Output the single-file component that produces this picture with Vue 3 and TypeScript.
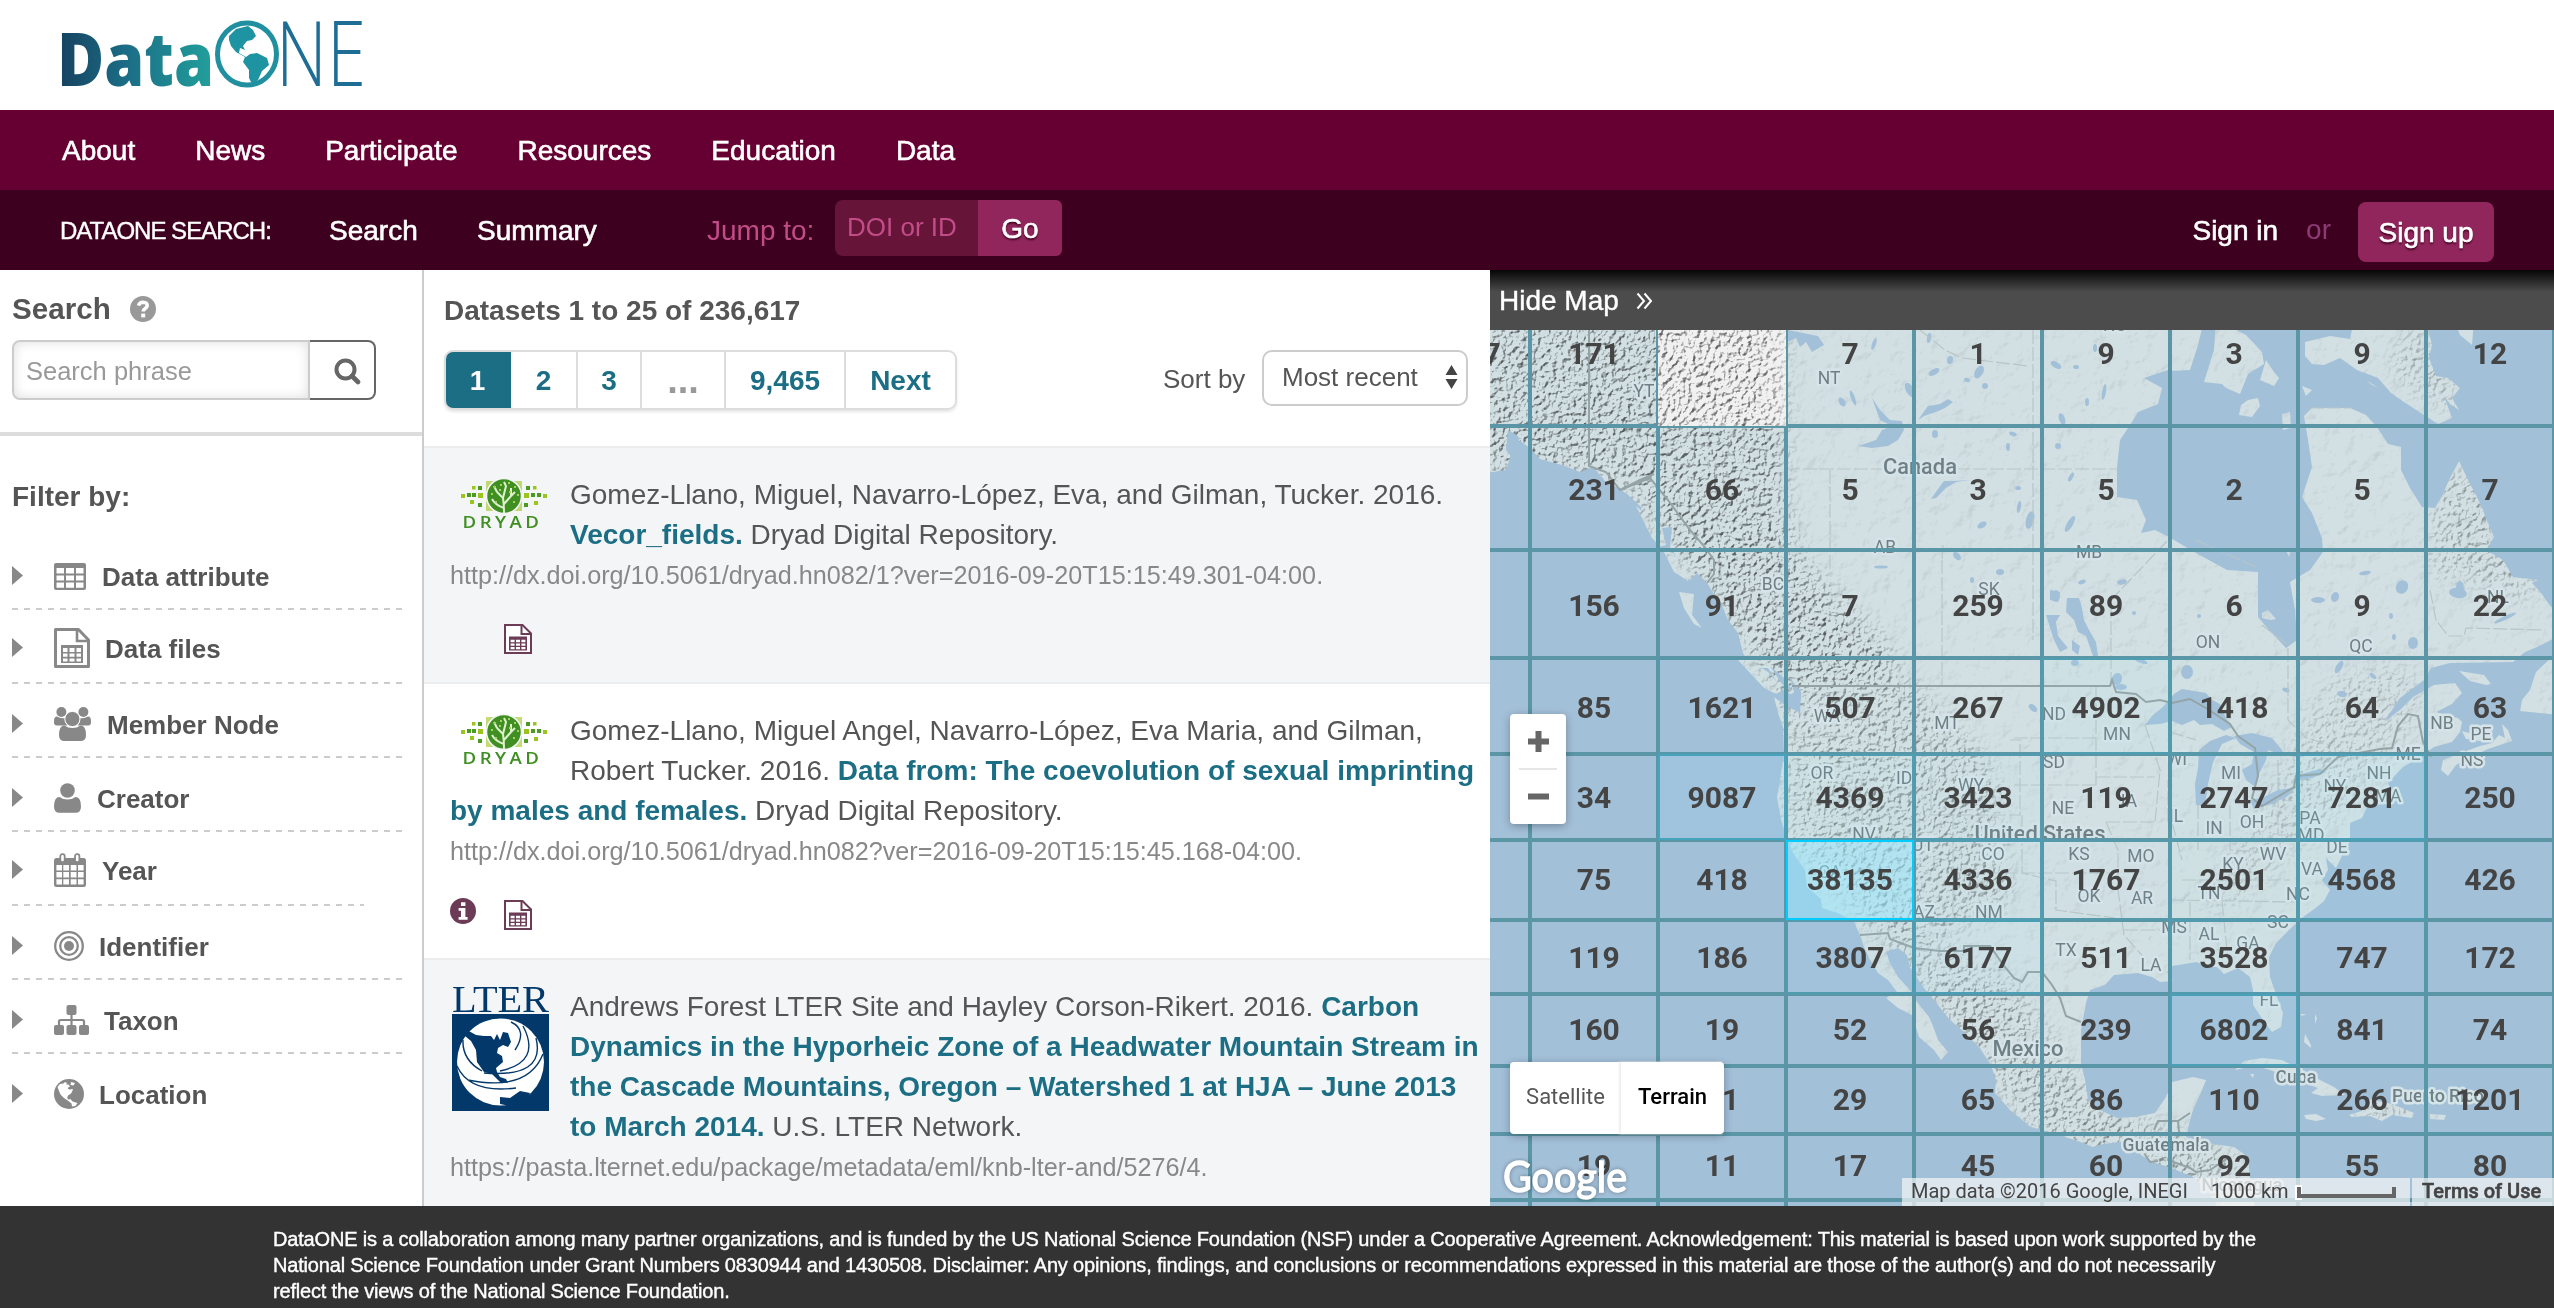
<script setup lang="ts">
interface Filter {
  icon: string
  label: string
  iconWidth: number
  gap: number
  center: number
  short?: boolean
}

const navItems: string[] = ['About', 'News', 'Participate', 'Resources', 'Education', 'Data']

const filters: Filter[] = [
  { icon: 'table', label: 'Data attribute', iconWidth: 32, gap: 16, center: 40 },
  { icon: 'file', label: 'Data files', iconWidth: 36, gap: 15, center: 38 },
  { icon: 'group', label: 'Member Node', iconWidth: 37, gap: 16, center: 40 },
  { icon: 'user', label: 'Creator', iconWidth: 27, gap: 16, center: 40 },
  { icon: 'calendar', label: 'Year', iconWidth: 32, gap: 16, center: 38, short: true },
  { icon: 'target', label: 'Identifier', iconWidth: 30, gap: 15, center: 40 },
  { icon: 'sitemap', label: 'Taxon', iconWidth: 35, gap: 15, center: 40 },
  { icon: 'globe', label: 'Location', iconWidth: 30, gap: 15, center: 40 },
]

/* Map grid, in page coordinates */
const colEdges: number[] = [1402, 1530, 1658, 1786, 1914, 2042, 2170, 2298, 2426, 2554]
const rowEdges: number[] = [290, 426, 550, 658, 754, 840, 920, 994, 1066, 1134, 1200, 1262]
const rowText: number[] = [353, 489.5, 605, 707, 797, 879, 957, 1029, 1099, 1165]
const counts: number[][] = [
  [7, 171, 0, 7, 1, 9, 3, 9, 12],
  [3, 231, 66, 5, 3, 5, 2, 5, 7],
  [0, 156, 91, 7, 259, 89, 6, 9, 22],
  [0, 85, 1621, 507, 267, 4902, 1418, 64, 63],
  [0, 34, 9087, 4369, 3423, 119, 2747, 7281, 250],
  [0, 75, 418, 38135, 4336, 1767, 2501, 4568, 426],
  [0, 119, 186, 3807, 6177, 511, 3528, 747, 172],
  [0, 160, 19, 52, 56, 239, 6802, 841, 74],
  [0, 11, 11, 29, 65, 86, 110, 266, 1201],
  [0, 19, 11, 17, 45, 60, 92, 55, 80],
  [0, 5, 5, 5, 5, 5, 5, 5, 5],
]

interface Cell { x: number; y: number; w: number; h: number; tx: number; ty: number; n: number; stroke: string; glow: number }

const cells: Cell[] = []
counts.forEach((row, r) => {
  row.forEach((n, c) => {
    if (r === 0 && c === 2) return
    const t = n / 38135
    const mix = (a: number, b: number): number => Math.round(a + (b - a) * t)
    cells.push({
      x: colEdges[c] + 1,
      y: rowEdges[r] + 1,
      w: colEdges[c + 1] - colEdges[c] - 2,
      h: rowEdges[r + 1] - rowEdges[r] - 2,
      tx: (colEdges[c] + colEdges[c + 1]) / 2,
      ty: r < 10 ? rowText[r] : 0,
      n: c === 0 || r === 10 || (r === 8 && c === 1) ? -1 : n,
      stroke: `rgb(${mix(90, 0)},${mix(150, 204)},${mix(166, 255)})`,
      glow: n > 30000 ? 0.24 : t * 0.25,
    })
  })
})

const places: [string, number, number][] = [
  ['NT', 1829, 378], ['YT', 1644, 391], ['AB', 1885, 547], ['BC', 1773, 584], ['SK', 1989, 589],
  ['MB', 2089, 552], ['ON', 2208, 642], ['QC', 2361, 646], ['NL', 2498, 597], ['WA', 1827, 716],
  ['MT', 1947, 723], ['OR', 1822, 773], ['ID', 1904, 778], ['WY', 1971, 785], ['NV', 1864, 834],
  ['UT', 1923, 845], ['CO', 1993, 854], ['AZ', 1924, 912], ['NM', 1989, 912], ['CA', 1830, 872],
  ['ND', 2054, 714], ['MN', 2117, 734], ['SD', 2054, 762], ['NE', 2063, 808], ['IA', 2129, 801],
  ['WI', 2177, 759], ['MI', 2231, 773], ['IL', 2176, 816], ['IN', 2214, 828], ['OH', 2252, 822],
  ['PA', 2310, 818], ['MD', 2311, 835], ['NY', 2335, 786], ['NH', 2379, 773], ['MA', 2388, 796],
  ['ME', 2408, 754], ['NB', 2442, 723], ['PE', 2481, 734], ['NS', 2472, 760], ['KS', 2079, 854],
  ['MO', 2141, 856], ['WV', 2273, 854], ['KY', 2233, 864], ['VA', 2312, 869], ['DE', 2337, 847],
  ['OK', 2089, 896], ['AR', 2142, 898], ['TN', 2209, 893], ['NC', 2298, 894], ['SC', 2278, 922],
  ['MS', 2174, 927], ['AL', 2209, 934], ['GA', 2248, 943], ['TX', 2066, 950], ['LA', 2151, 965],
  ['FL', 2269, 1000], ['NU', 2115, 325],
]

const countries: [string, number, number, number, number][] = [
  ['Canada', 1920, 466, 22, 74], ['United States', 2040, 833, 22, 131], ['Mexico', 2028, 1048, 22, 71],
  ['Cuba', 2296, 1077, 18, 41], ['Puerto Rico', 2438, 1096, 18, 92], ['Guatemala', 2166, 1145, 18, 87],
  ['Nicaragua', 2242, 1185, 18, 81],
]

/* Small northern lakes, as [x, y, rx, ry, tilt] */
const lakes: [number, number, number, number, number][] = [
  [1874, 344, 2, 6, 20], [1842, 402, 3, 5, -30], [1853, 398, 2, 8, -20], [1934, 372, 6, 3, -30],
  [1950, 360, 3, 4, 10], [1979, 372, 4, 7, 30], [1985, 386, 3, 3, 0], [1967, 380, 3, 2, 20],
  [1929, 338, 2, 5, 10], [2056, 365, 6, 3, 30], [2076, 367, 3, 2, 10], [2104, 392, 2, 8, 10],
  [2087, 402, 2, 4, 0], [2062, 419, 3, 6, -20], [2095, 348, 2, 4, 0], [2013, 434, 4, 2, 20],
  [2008, 447, 2, 4, 0], [2058, 446, 3, 3, 0], [2071, 477, 2, 5, 30], [2019, 507, 2, 6, 10],
  [2018, 488, 3, 2, 0], [2030, 520, 4, 9, 15], [2070, 524, 3, 9, 30], [1982, 525, 5, 3, -30],
  [2000, 572, 4, 3, 0], [1972, 580, 2, 3, 0], [1957, 556, 3, 5, -40], [1881, 567, 7, 1.6, 0],
  [2082, 582, 4, 2, -20], [2122, 582, 5, 2.5, -10], [2365, 573, 6, 2, -10], [2318, 600, 7, 3, 0],
  [2335, 597, 4, 5, 20], [2402, 587, 6, 7, 30], [2413, 643, 5, 6, 0], [2391, 616, 2, 3, 0],
  [2458, 593, 9, 5, 10], [2460, 588, 4, 7, 0], [2394, 637, 2, 3, 0], [2342, 694, 5, 3, 10],
  [2339, 667, 3, 7, 30], [2373, 676, 4, 2, 40], [2141, 661, 7, 2, 20], [2075, 663, 4, 3, 0],
  [2117, 679, 5, 6, 20], [2121, 687, 6, 3, 0], [2187, 672, 6, 7, 0], [2286, 690, 4, 2, 20],
  [2033, 708, 3, 5, -50], [2505, 618, 12, 2, -25], [1935, 434, 3, 4, 0], [1910, 390, 4, 8, -30],
  [2056, 596, 4, 6, 0], [2134, 613, 2, 2, 0], [2199, 616, 2, 2, 0],
]

const mainLand =
  'M1480 320 L1480 474 L1506 470 L1512 452 L1520 441 L1530 448 L1540 459 L1562 465 L1580 472 L1593 467 L1606 482 L1618 488 L1627 494 L1641 507 L1646 526 L1659 547 L1666 545 L1662 528 L1672 527 L1670 548 L1680 560 L1690 580 L1697 573 L1707 583 L1714 594 L1721 603 L1728 620 L1738 633 L1743 653 L1752 668 L1768 668 L1778 684 L1790 694 L1801 692 L1799 712 L1786 706 L1774 697 L1778 713 L1783 727 L1784 753 L1780 780 L1777 797 L1781 820 L1785 833 L1793 853 L1805 870 L1807 887 L1821 899 L1822 908 L1838 913 L1854 922 L1860 935 L1864 947 L1870 960 L1878 973 L1888 980 L1897 992 L1886 998 L1898 1008 L1912 1015 L1919 1037 L1934 1050 L1941 1060 L1948 1052 L1938 1040 L1933 1026 L1929 1017 L1917 1002 L1910 990 L1898 977 L1890 963 L1886 952 L1898 948 L1907 955 L1910 968 L1924 988 L1934 1000 L1950 1020 L1962 1030 L1979 1047 L1991 1065 L1996 1080 L1995 1093 L2010 1110 L2031 1127 L2052 1133 L2078 1141 L2093 1147 L2103 1144 L2121 1142 L2141 1155 L2152 1162 L2169 1167 L2193 1177 L2207 1190 L2221 1212 L2256 1212 L2250 1180 L2248 1157 L2234 1147 L2207 1143 L2186 1137 L2190 1120 L2193 1110 L2202 1090 L2206 1080 L2193 1077 L2172 1082 L2166 1097 L2155 1113 L2135 1117 L2117 1118 L2100 1110 L2088 1100 L2085 1080 L2081 1063 L2081 1030 L2086 1003 L2090 990 L2105 985 L2114 975 L2138 973 L2152 977 L2160 982 L2173 981 L2167 972 L2172 966 L2197 962 L2206 967 L2217 967 L2224 974 L2238 968 L2250 977 L2253 990 L2253 1005 L2265 1023 L2272 1032 L2281 1027 L2283 1013 L2277 997 L2270 977 L2269 957 L2276 943 L2289 930 L2303 917 L2317 907 L2324 901 L2330 890 L2322 880 L2328 870 L2326 858 L2336 868 L2344 852 L2350 840 L2350 823 L2362 818 L2367 807 L2386 803 L2393 795 L2388 783 L2403 767 L2420 757 L2434 747 L2452 742 L2460 732 L2462 722 L2458 718 L2448 716 L2436 712 L2452 704 L2462 693 L2455 683 L2434 685 L2413 697 L2400 710 L2384 722 L2400 698 L2424 680 L2431 668 L2450 663 L2513 662 L2525 652 L2537 647 L2551 640 L2562 636 L2562 606 L2551 607 L2541 593 L2532 583 L2538 580 L2513 577 L2503 560 L2486 550 L2494 537 L2487 520 L2490 530 L2483 510 L2477 497 L2468 480 L2459 461 L2449 480 L2443 494 L2435 508 L2422 507 L2410 488 L2401 470 L2401 447 L2388 444 L2377 427 L2366 415 L2350 408 L2312 408 L2304 416 L2308 440 L2312 467 L2302 497 L2312 513 L2322 538 L2323 552 L2310 570 L2290 582 L2295 610 L2297 640 L2286 648 L2269 630 L2258 617 L2258 572 L2227 570 L2196 553 L2169 537 L2155 530 L2141 533 L2146 520 L2137 500 L2117 497 L2117 467 L2120 440 L2132 422 L2138 412 L2158 404 L2162 388 L2144 378 L2168 370 L2168 320 Z'

const islands: string[] = [
  'M2172 320 L2204 320 L2198 345 L2190 370 L2170 371 Z',
  'M2216 320 L2246 335 L2262 352 L2264 364 L2248 374 L2240 394 L2226 388 L2222 384 L2204 382 L2214 350 Z',
  'M2266 360 L2274 372 L2279 378 L2274 386 L2260 380 Z',
  'M2248 400 L2258 398 L2260 406 L2252 417 L2239 415 L2241 405 Z',
  'M2282 414 L2290 412 L2291 428 L2283 430 Z',
  'M2302 386 L2312 390 L2306 396 Z',
  'M2366 380 L2377 387 L2372 385 Z',
  'M2305 342 L2330 336 L2350 339 L2354 320 L2426 320 L2432 345 L2429 358 L2436 376 L2448 378 L2460 388 L2452 398 L2459 410 L2450 404 L2444 396 L2452 418 L2438 424 L2424 415 L2404 402 L2391 393 L2378 378 L2357 370 L2340 358 L2324 365 L2312 364 L2305 356 Z',
  'M2454 320 L2474 320 L2472 345 L2460 335 Z',
  'M1679 592 L1694 594 L1692 615 L1702 628 L1694 624 L1684 608 Z',
  'M1737 659 L1748 660 L1768 672 L1784 690 L1776 694 L1764 688 L1752 675 Z',
  'M1662 548 L1676 555 L1690 575 L1688 581 L1674 572 Z',
  'M1636 506 L1650 518 L1660 546 L1652 538 Z',
  'M2459 671 L2484 675 L2491 684 L2486 685 L2470 681 Z',
  'M2554 655 L2560 655 L2560 715 L2520 711 L2522 700 L2530 690 L2536 672 Z',
  'M2441 770 L2443 760 L2458 754 L2480 746 L2492 743 L2499 735 L2505 738 L2502 724 L2508 730 L2512 741 L2488 749 L2470 757 L2456 765 L2448 776 Z',
  'M2462 731 L2476 735 L2490 738 L2480 741 L2466 739 Z',
  'M2235 1070 L2244 1061 L2262 1058 L2282 1060 L2302 1070 L2318 1079 L2334 1087 L2345 1095 L2322 1096 L2311 1093 L2318 1088 L2296 1080 L2284 1075 L2270 1070 L2252 1065 L2240 1069 Z',
  'M2304 1115 L2316 1114 L2326 1119 L2316 1121 L2306 1119 Z',
  'M2348 1115 L2362 1111 L2368 1099 L2392 1104 L2414 1113 L2412 1118 L2392 1115 L2382 1121 L2370 1116 L2352 1117 Z',
  'M2430 1114 L2446 1115 L2444 1120 L2430 1119 Z',
  'M2305 1034 L2311 1045 L2311 1048 L2304 1042 Z',
  'M2300 1014 L2307 1014 L2302 1016 Z',
  'M2315 1014 L2317 1018 L2315 1024 Z',
  'M2250 1074 L2254 1074 L2253 1078 Z',
  'M2262 613 L2268 610 L2276 619 L2270 620 L2262 618 Z',
  'M2286 550 L2291 550 L2289 557 Z',
]

const waters: string[] = [
  // Great Bear and Great Slave lakes
  'M1788 330 L1818 336 L1824 345 L1812 352 L1806 342 L1800 347 L1796 338 L1788 342 Z',
  'M1948 399 L1953 402 L1945 408 L1936 412 L1924 416 L1918 420 L1928 406 L1940 404 Z',
  'M1872 398 L1880 410 L1890 420 L1902 421 L1904 430 L1898 440 L1888 446 L1872 448 L1858 446 L1876 440 L1882 430 L1892 426 L1880 420 Z',
  'M1971 480 L1956 482 L1946 488 L1936 498 L1931 499 L1938 489 L1944 481 L1954 481 Z',
  // Athabasca, Winnipeg, Winnipegosis
  'M2067 598 L2079 598 L2082 608 L2084 620 L2089 630 L2096 642 L2098 656 L2093 656 L2086 636 L2078 632 L2074 620 L2066 612 Z',
  'M2050 590 L2060 592 L2058 602 L2050 600 Z M2046 615 L2060 615 L2056 622 L2058 636 L2068 648 L2060 652 L2054 640 Z',
  'M2072 640 L2080 646 L2078 655 L2072 650 Z',
  // Lake Superior
  'M2145 725 L2152 716 L2164 706 L2174 694 L2182 689 L2194 691 L2206 693 L2212 700 L2220 704 L2226 718 L2232 727 L2224 731 L2212 724 L2200 725 L2194 720 L2182 725 L2172 721 L2160 724 Z',
  // Lake Michigan
  'M2199 750 L2210 741 L2226 735 L2236 738 L2222 744 L2213 762 L2208 784 L2205 806 L2196 805 L2195 784 L2198 768 Z',
  // Lake Huron
  'M2234 736 L2252 733 L2272 738 L2282 750 L2284 756 L2268 750 L2266 760 L2260 772 L2254 786 L2246 780 L2242 770 L2252 764 L2254 752 L2240 744 Z',
  // Erie and Ontario
  'M2250 800 L2262 798 L2278 790 L2294 788 L2288 796 L2272 804 L2254 809 Z',
  'M2294 776 L2320 769 L2326 772 L2312 778 L2298 780 Z',
  // Puget Sound
  'M1790 678 L1801 692 L1800 716 L1794 704 L1786 702 L1794 692 Z M1770 666 L1784 678 L1792 690 L1782 684 Z',
  'M1508 430 L1518 436 L1522 452 L1512 458 L1506 450 Z',
]

const borders: string[] = [
  'M1792 686 L2110 686 L2112 680 L2116 692 L2136 694 L2146 702 L2160 700 L2172 703 L2190 699 L2206 708 L2230 724 L2238 736 L2255 748 L2258 776 L2252 798 L2262 806 L2294 787 L2296 776 L2320 774 L2338 757 L2380 749 L2392 748 L2398 726 L2408 714 L2418 716 L2423 742 L2431 757',
  'M1589 330 L1589 466 L1606 472 L1620 490 L1640 480 L1654 474 M1620 490 L1650 478 L1668 500 L1690 530 L1704 546 L1714 560 L1714 574 L1707 583',
  'M1860 935 L1888 933 L1890 939 L1914 948 L1940 951 L1964 951 L1964 946 L1990 946 L2004 966 L2014 978 L2022 982 L2028 972 L2042 972 L2052 985 L2060 998 L2066 1016 L2081 1022',
  'M2154 1130 L2158 1121 L2178 1121 L2190 1113 M2178 1121 L2179 1132 L2168 1160 L2190 1168 L2196 1172 L2210 1170 L2228 1158',
  'M2144 1153 L2150 1162 L2158 1161',
]

const stateLines: string[] = [
  'M1786 469 L2118 469', 'M2033 330 L2033 640', 'M1920 330 L1945 350 L1962 358 L2028 366', 'M1942 560 L1942 686',
  'M2111 686 L2111 600 L2168 540', 'M1830 470 L1830 570 M1943 545 L1942 560', 'M2288 648 L2288 720 L2306 738 L2330 745',
  'M1786 800 L1862 800 L1862 780 M1914 740 L1931 740 L1931 815 L2020 815 L2020 740 L2010 740 M2014 738 L2096 738 M2014 785 L2096 785',
  'M1862 800 L1862 860 L1905 905 M1953 815 L1953 920 M1953 873 L2110 873 M2022 815 L2022 873 L2056 881 L2056 910 L2115 918',
  'M2096 686 L2096 785 M2096 777 L2155 777 M2106 822 L2155 822 M2106 822 L2118 850 L2118 890 L2124 935 L2146 960',
  'M2124 930 L2160 930 M2172 822 L2182 860 M2170 900 L2300 902 M2190 902 L2190 960 M2222 902 L2228 960 M2198 805 L2198 850 M2278 760 L2278 835',
  'M2182 880 L2290 880 M2230 805 L2230 850 L2260 852 M2278 835 L2326 835 M2145 725 L2160 770 L2155 822',
  'M2430 590 L2436 620 L2448 636 L2464 636 L2466 628 L2545 630', 'M2310 408 L2350 408', 'M2196 540 L2258 568 M2262 625 L2288 645',
  'M1788 738 L1850 736 M2170 732 L2196 740 M2168 822 L2168 780',
]

const caret = 'M0 0 L11 9.5 L0 19 Z'
</script>

<template>
  <div class="page">
    <header class="brand">
      <svg class="brand-logo" width="330" height="94" viewBox="48 0 330 94">
        <defs>
          <linearGradient id="dataGrad" x1="0" x2="1" y1="0" y2="0">
            <stop offset="0" stop-color="#16415f" />
            <stop offset="0.45" stop-color="#1b6e86" />
            <stop offset="1" stop-color="#22a09c" />
          </linearGradient>
        </defs>
        <text x="57" y="86" class="logo-data" textLength="157" lengthAdjust="spacingAndGlyphs" fill="url(#dataGrad)">Data</text>
        <ellipse cx="247" cy="54" rx="29.5" ry="31" fill="#fff" stroke="#2090a0" stroke-width="5" />
        <path fill="#1e93a2" d="M229 36 L236 29 L248 26 L253 30 L256 36 L252 40 L247 41 L243 46 L245 50 L240 48 L239 53 L246 57 L250 54 L257 53 L267 58 L269 65 L262 71 L258 80 L252 84 L249 78 L249 70 L243 62 L245 57 L236 52 L231 46 L229 40 Z" />
        <text x="276" y="86" class="logo-one" textLength="90" lengthAdjust="spacingAndGlyphs">NE</text>
      </svg>
    </header>

    <nav class="nav-main">
      <a v-for="item in navItems" :key="item" class="nav-link">{{ item }}</a>
    </nav>

    <nav class="nav-sub">
      <span class="sub-title">DATAONE SEARCH:</span>
      <a class="sub-link s1">Search</a>
      <a class="sub-link s2">Summary</a>
      <span class="jump">Jump to:</span>
      <span class="jump-input">DOI or ID</span>
      <span class="jump-go">Go</span>
      <span class="spacer"></span>
      <a class="sub-link">Sign in</a>
      <span class="or">or</span>
      <span class="signup">Sign up</span>
    </nav>

    <main class="content">
      <aside class="sidebar">
        <div class="side-head">
          <span class="side-title">Search</span>
          <svg width="26" height="26" viewBox="0 0 26 26">
            <circle cx="13" cy="13" r="13" fill="#999" />
            <path d="M8.6 9.6 Q9.4 6.2 13 6.2 Q17.4 6.4 17.2 9.8 Q17 11.6 14.8 12.8 Q13.2 13.7 13.2 15.6" fill="none" stroke="#fff" stroke-width="3.6" />
            <rect x="11.2" y="17.6" width="4" height="3.8" fill="#fff" />
          </svg>
        </div>
        <div class="search-box">
          <div class="search-input">Search phrase</div>
          <div class="search-btn">
            <svg width="27" height="27" viewBox="0 0 27 27">
              <circle cx="11.5" cy="11.5" r="9" fill="none" stroke="#666" stroke-width="4" />
              <path d="M18 18 L24 24" stroke="#666" stroke-width="4.6" stroke-linecap="round" />
            </svg>
          </div>
        </div>
        <div class="side-rule"></div>
        <div class="filter-title">Filter by:</div>
        <div v-for="f in filters" :key="f.label" class="filter">
          <div class="filter-row" :style="{ height: f.center * 2 + 'px' }">
            <svg class="caret" width="11" height="20" viewBox="0 0 11 20"><path :d="caret" fill="#888" /></svg>
            <span class="filter-icon" :style="{ width: f.iconWidth + 'px', marginRight: f.gap + 'px' }">
              <svg v-if="f.icon === 'table'" width="32" height="27" viewBox="0 0 32 27">
                <path fill="#888" fill-rule="evenodd" d="M2 0H30Q32 0 32 2V25Q32 27 30 27H2Q0 27 0 25V2Q0 0 2 0Z M2.5 5V10.5H10V5Z M12 5V10.5H20V5Z M22 5V10.5H29.5V5Z M2.5 12.5V17.5H10V12.5Z M12 12.5V17.5H20V12.5Z M22 12.5V17.5H29.5V12.5Z M2.5 19.5V24.8H10V19.5Z M12 19.5V24.8H20V19.5Z M22 19.5V24.8H29.5V19.5Z" />
              </svg>
              <svg v-else-if="f.icon === 'file'" width="36" height="40" viewBox="0 0 36 40">
                <path d="M1.5 1.5H24.5L34.5 12V38.5H1.5Z" fill="#fff" stroke="#888" stroke-width="3" stroke-linejoin="round" />
                <path d="M23 2V13H34" fill="none" stroke="#888" stroke-width="2.6" />
                <path fill="#888" fill-rule="evenodd" d="M7 17H29V35H7Z M9 20V24H13.5V20Z M15.5 20V24H20.5V20Z M22.5 20V24H27V20Z M9 25.6V28.8H13.5V25.6Z M15.5 25.6V28.8H20.5V25.6Z M22.5 25.6V28.8H27V25.6Z M9 30.4V33.6H13.5V30.4Z M15.5 30.4V33.6H20.5V30.4Z M22.5 30.4V33.6H27V30.4Z" />
              </svg>
              <svg v-else-if="f.icon === 'group'" width="37" height="34" viewBox="0 0 37 34">
                <g fill="#888">
                  <circle cx="7.4" cy="5" r="5" /><circle cx="29.4" cy="5" r="5" />
                  <path d="M0 14Q0 9.5 3 9.5Q7 12 11 11Q10.400 15.500 13.500 18.500H3Q0 18.500 0 15.500Z" />
                  <path d="M37 14Q37 9.500 34 9.500Q30 12 26 11Q26.500 15.500 23.500 18.500H34Q37 18.500 37 15.500Z" />
                </g>
                <circle cx="18.400" cy="12" r="7.600" fill="#888" stroke="#fff" stroke-width="1" />
                <path d="M5 28Q5 18.500 10.500 18.500Q14 21 18.400 21Q23 21 26.500 18.500Q32 18.500 32 28Q32 34 26.500 34H10.500Q5 34 5 28Z" fill="#888" />
              </svg>
              <svg v-else-if="f.icon === 'user'" width="27" height="30" viewBox="0 0 27 30">
                <circle cx="13.500" cy="7.500" r="7.300" fill="#888" />
                <path d="M0 23.500Q0 14 5.500 14Q9 16.600 13.500 16.600Q18 16.600 21.500 14Q27 14 27 23.500Q27 29.800 21.500 29.800H5.500Q0 29.800 0 23.500Z" fill="#888" />
              </svg>
              <svg v-else-if="f.icon === 'calendar'" width="32" height="34" viewBox="0 0 32 34">
                <path fill="#888" fill-rule="evenodd" d="M2.500 5H29.500Q32 5 32 7.500V31.500Q32 34 29.500 34H2.500Q0 34 0 31.500V7.500Q0 5 2.500 5Z M2.400 12V17.400H8V12Z M9.300 12V17.400H15V12Z M16.700 12V17.400H22.500V12Z M24 12V17.400H29.600V12Z M2.400 19V24.600H8V19Z M9.300 19V24.600H15V19Z M16.700 19V24.600H22.500V19Z M24 19V24.600H29.600V19Z M2.400 26.200V31.600H8V26.200Z M9.300 26.200V31.600H15V26.200Z M16.700 26.200V31.600H22.500V26.200Z M24 26.200V31.600H29.600V26.200Z" />
                <rect x="6.300" y="1.200" width="4.400" height="8" rx="2" fill="#fff" stroke="#888" stroke-width="1.800" />
                <rect x="21" y="1.200" width="4.400" height="8" rx="2" fill="#fff" stroke="#888" stroke-width="1.800" />
              </svg>
              <svg v-else-if="f.icon === 'target'" width="30" height="30" viewBox="0 0 30 30">
                <g fill="none" stroke="#888" stroke-width="2.300"><circle cx="15" cy="15" r="13.800" /><circle cx="15" cy="15" r="8.800" /></g>
                <circle cx="15" cy="15" r="5" fill="#888" />
              </svg>
              <svg v-else-if="f.icon === 'sitemap'" width="35" height="30" viewBox="0 0 35 30">
                <g fill="#888">
                  <rect x="12.500" width="10" height="10" rx="2" /><rect y="20" width="10" height="10" rx="2" />
                  <rect x="12.500" y="20" width="10" height="10" rx="2" /><rect x="25" y="20" width="10" height="10" rx="2" />
                </g>
                <path d="M17.500 9V21 M5 21V16.500Q5 15 6.500 15H28.500Q30 15 30 16.500V21" fill="none" stroke="#888" stroke-width="2.200" />
              </svg>
              <svg v-else width="30" height="30" viewBox="0 0 30 30">
                <circle cx="15" cy="15" r="15" fill="#888" />
                <path fill="#fff" d="M3.500 8 L6 5 L9.500 4.500 L11 3 L13 4 L12 5.500 L14.500 5.500 L16 7.500 L13.500 9 L15 10.500 L19 10 L18 13 L16.500 15 L14 16.500 L13.200 19 L14 20.500 L16.500 20 L18 22 L20 23 L23.500 24 L21.500 27 L18 27.500 L17.500 24.500 L14 21.800 L10 19 L6.500 15.500 L4.800 11.500 Z" />
                <path fill="#fff" d="M17 3 L21 4 L19.500 6.500 L16.500 6 Z" />
              </svg>
            </span>
            <span class="filter-label">{{ f.label }}</span>
          </div>
          <div class="dash" :class="{ short: f.short, last: f.label === 'Location' }"></div>
        </div>
      </aside>

      <section class="results">
        <h2 class="count">Datasets 1 to 25 of 236,617</h2>
        <div class="toolbar">
          <div class="pager">
            <span class="pg active w1">1</span><span class="pg w2">2</span><span class="pg w3">3</span><span class="pg dots w4">...</span><span class="pg w5">9,465</span><span class="pg w6">Next</span>
          </div>
          <span class="sort-label">Sort by</span>
          <div class="select">
            <span>Most recent</span>
            <svg width="13" height="24" viewBox="0 0 13 24"><path d="M6.500 0 L12.500 10 H0.500 Z M6.500 24 L12.500 14 H0.500 Z" fill="#444" /></svg>
          </div>
        </div>

        <article v-for="i in 3" :key="i" class="item" :class="'item' + i">
          <svg v-if="i < 3" class="thumb" width="120" height="78" viewBox="450 710 120 78">
            <g fill="#9bc41c">
              <rect x="461" y="730" width="4" height="4" /><rect x="467" y="729" width="4" height="4" fill="#4b9a22" />
              <rect x="472" y="722" width="3.500" height="3.500" /><rect x="472" y="729" width="4" height="4" fill="#4b9a22" /><rect x="478" y="729" width="5" height="5" />
              <rect x="478" y="722" width="4" height="4" fill="#4b9a22" /><rect x="470" y="736" width="4" height="4" /><rect x="478" y="739" width="4" height="4" fill="#4b9a22" />
              <rect x="486" y="717" width="36" height="30" opacity="0.600" />
              <rect x="543" y="730" width="4" height="4" /><rect x="537" y="729" width="4" height="4" fill="#4b9a22" />
              <rect x="533" y="722" width="3.500" height="3.500" /><rect x="531" y="729" width="4" height="4" fill="#4b9a22" /><rect x="524" y="729" width="5" height="5" />
              <rect x="526" y="722" width="4" height="4" fill="#4b9a22" /><rect x="534" y="737" width="4" height="4" /><rect x="524" y="739" width="4" height="4" fill="#4b9a22" />
            </g>
            <circle cx="504" cy="732" r="17.500" fill="#3f8f22" stroke="#f4f5f7" stroke-width="1.500" />
            <path d="M504 749 Q504 740 503 734 L497 728 M504 740 L511 732 L515 728 M503 734 L506 722 L504 718 M497 728 L494 722 M511 732 L511 724 M504 744 Q495 741 492 735" fill="none" stroke="#dff0cf" stroke-width="2" />
            <path d="M494 723h2M500 721h2M508 719h2M514 723h2M491 730h2M499 726h2M509 728h2M517 731h2M495 738h2M513 738h2" stroke="#a8d060" stroke-width="2" />
            <text x="462.500" y="764" class="dryad" textLength="80" lengthAdjust="spacingAndGlyphs">DRYAD</text>
          </svg>
          <svg v-else class="thumb" width="120" height="130" viewBox="450 984 120 130">
            <text x="452" y="1011.500" class="lter" textLength="97" lengthAdjust="spacingAndGlyphs">LTER</text>
            <rect x="452" y="1014" width="97" height="97" fill="#03386a" />
            <circle cx="500.500" cy="1062" r="43.500" fill="#fff" />
            <path d="M511 1022 Q528 1030 515 1050 M523 1026 Q542 1062 500 1071 M536 1038 Q546 1078 484 1073 M543 1054 Q528 1092 468 1080 M457 1066 Q470 1094 516 1088 M463 1040 Q462 1060 482 1071" fill="none" stroke="#03386a" stroke-width="1.400" />
            <path fill="#03386a" d="M467 1030 L476 1035 L484 1036 L491 1036 L494 1040 L497 1034 L500 1040 L503 1032 L508 1033 L511 1042 L508 1047 L503 1045 L498 1048 L497 1053 L502 1056 L503 1062 L496 1068 L497 1072 L500 1077 L506 1079 L508 1083 L500 1082 L492 1074 L484 1072 L477 1062 L476 1050 L471 1041 L465 1036 Z" />
            <path fill="#03386a" d="M500 1097 L510 1098 L520 1091 L530 1093 L527 1099 L516 1107 L500 1104 Z" />
          </svg>

          <template v-if="i === 1">
            <div class="line">Gomez-Llano, Miguel, Navarro-López, Eva, and Gilman, Tucker. 2016.</div>
            <div class="line"><b>Vecor_fields.</b> Dryad Digital Repository.</div>
            <div class="url">http://dx.doi.org/10.5061/dryad.hn082/1?ver=2016-09-20T15:15:49.301-04:00.</div>
          </template>
          <template v-else-if="i === 2">
            <div class="line">Gomez-Llano, Miguel Angel, Navarro-López, Eva Maria, and Gilman,</div>
            <div class="line">Robert Tucker. 2016. <b>Data from: The coevolution of sexual imprinting</b></div>
            <div class="line"><b>by males and females.</b> Dryad Digital Repository.</div>
            <div class="url">http://dx.doi.org/10.5061/dryad.hn082?ver=2016-09-20T15:15:45.168-04:00.</div>
          </template>
          <template v-else>
            <div class="line">Andrews Forest LTER Site and Hayley Corson-Rikert. 2016. <b>Carbon</b></div>
            <div class="line"><b>Dynamics in the Hyporheic Zone of a Headwater Mountain Stream in</b></div>
            <div class="line"><b>the Cascade Mountains, Oregon – Watershed 1 at HJA – June 2013</b></div>
            <div class="line"><b>to March 2014.</b> U.S. LTER Network.</div>
            <div class="url">https://pasta.lternet.edu/package/metadata/eml/knb-lter-and/5276/4.</div>
          </template>

          <div v-if="i < 3" class="marks">
            <svg class="info" width="26" height="26" viewBox="0 0 26 26">
              <template v-if="i === 2">
                <circle cx="13" cy="13" r="13" fill="#6c3c57" />
                <path d="M11 4.200H15.400V8H11Z M8.600 10H15.400V19H17.600V21.800H8.600V19H11V12.800H8.600Z" fill="#fff" />
              </template>
            </svg>
            <svg class="doc" width="28" height="30" viewBox="0 0 28 30">
              <path d="M1 1H18.500L27 9.500V29H1Z" fill="#fff" stroke="#6c3c57" stroke-width="2" />
              <path d="M17.500 1V10H27" fill="none" stroke="#6c3c57" stroke-width="2" />
              <path fill="#6c3c57" fill-rule="evenodd" d="M5 12.500H23V26.500H5Z M6.600 15.800V18.200H10.600V15.800Z M12 15.800V18.200H16V15.800Z M17.400 15.800V18.200H21.400V15.800Z M6.600 19.400V21.800H10.600V19.400Z M12 19.400V21.800H16V19.400Z M17.400 19.400V21.800H21.400V19.400Z M6.600 23V25.200H10.600V23Z M12 23V25.200H16V23Z M17.400 23V25.200H21.400V23Z" />
            </svg>
          </div>
        </article>
      </section>

      <section class="map-col">
        <div class="map-bar">
          <span>Hide Map</span>
          <svg width="17" height="18" viewBox="0 0 17 18"><path d="M1.500 1.500 L8 9 L1.500 16.500 M8.500 1.500 L15 9 L8.500 16.500" fill="none" stroke="#fff" stroke-width="2" /></svg>
        </div>
        <div class="map">
          <svg width="1064" height="876" viewBox="1490 330 1064 876">
            <defs>
              <clipPath id="landClip">
                <path :d="mainLand" />
                <path v-for="(d, k) in islands" :key="k" :d="d" />
              </clipPath>
              <filter id="relief" x="0" y="0" width="100%" height="100%" color-interpolation-filters="sRGB">
                <feTurbulence type="fractalNoise" baseFrequency="0.2" numOctaves="4" seed="7" result="n" />
                <feDiffuseLighting in="n" surfaceScale="3.6" diffuseConstant="1.6" lighting-color="#ffffff">
                  <feDistantLight azimuth="225" elevation="46" />
                </feDiffuseLighting>
              </filter>
              <filter id="softRelief" x="0" y="0" width="100%" height="100%" color-interpolation-filters="sRGB">
                <feTurbulence type="fractalNoise" baseFrequency="0.06" numOctaves="4" seed="3" result="n" />
                <feDiffuseLighting in="n" surfaceScale="2" diffuseConstant="1.480" lighting-color="#ffffff">
                  <feDistantLight azimuth="225" elevation="46" />
                </feDiffuseLighting>
              </filter>
              <filter id="blur"><feGaussianBlur stdDeviation="12" /></filter>
              <mask id="ranges" maskUnits="userSpaceOnUse" x="1490" y="330" width="1064" height="876">
                <g filter="url(#blur)">
                  <path d="M1470 310 L1780 310 L1784 500 L1800 560 L1890 650 L1904 740 L1880 740 L1780 690 L1700 580 L1620 480 L1470 470 Z" fill="#eee" />
                  <path d="M1780 680 L1910 680 L1990 760 L2010 900 L1900 960 L1790 840 Z" fill="#999" />
                  <path d="M1890 940 L2010 980 L2090 1100 L2240 1160 L2210 1200 L2040 1140 L1940 1010 Z" fill="#aaa" />
                  <path d="M2330 680 L2410 660 L2420 720 L2330 820 L2200 930 L2220 880 Z" fill="#555" />
                  <path d="M2390 370 L2470 420 L2420 320 Z M2440 470 L2500 480 L2540 600 L2430 570 Z" fill="#888" />
                  <path d="M2340 1095 L2420 1100 L2420 1125 L2350 1120 Z" fill="#999" />
                </g>
              </mask>
            </defs>

            <rect x="1490" y="330" width="1064" height="876" fill="#a3c0d9" />
            <g fill="#d2e0e3">
              <path :d="mainLand" />
              <path v-for="(d, k) in islands" :key="k" :d="d" />
            </g>
            <rect x="1658" y="330" width="128" height="96" fill="#f1f1f1" />
            <g class="shade" clip-path="url(#landClip)">
              <g opacity="0.180"><rect x="1490" y="330" width="1064" height="876" filter="url(#softRelief)" /></g>
              <g mask="url(#ranges)" opacity="0.620"><rect x="1490" y="330" width="1064" height="876" filter="url(#relief)" /></g>
            </g>
            <g fill="#a3c0d9">
              <path v-for="(d, k) in waters" :key="k" :d="d" />
              <ellipse v-for="(l, k) in lakes" :key="'l' + k" :cx="l[0]" :cy="l[1]" :rx="l[2]" :ry="l[3]" :transform="`rotate(${l[4]} ${l[0]} ${l[1]})`" />
            </g>
            <g fill="none" stroke="#b7c5c7" stroke-width="1.200" stroke-dasharray="14 3">
              <path v-for="(d, k) in stateLines" :key="k" :d="d" />
            </g>
            <g fill="none" stroke="#94a3a5" stroke-width="2">
              <path v-for="(d, k) in borders" :key="k" :d="d" />
            </g>
            <g class="place" font-size="17.500">
              <text v-for="p in places" :key="p[0]" :x="p[1]" :y="p[2] + 6.200">{{ p[0] }}</text>
            </g>
            <g class="place country">
              <text v-for="p in countries" :key="p[0]" :x="p[1]" :y="p[2] + p[3] * 0.350" :font-size="p[3]" :textLength="p[4]">{{ p[0] }}</text>
            </g>

            <g v-for="(c, k) in cells" :key="k">
              <rect :x="c.x" :y="c.y" :width="c.w" :height="c.h" fill="#8fe8ff" :fill-opacity="c.glow * 2" :stroke="c.stroke" stroke-width="2" />
            </g>
            <rect x="1787" y="841" width="126" height="78" fill="none" stroke="#00ccff" stroke-width="2" />
            <g class="num">
              <template v-for="(c, k) in cells" :key="k">
                <text v-if="c.n > 0" :x="c.tx" :y="c.ty + 10.700">{{ c.n }}</text>
              </template>
              <text x="1492" y="363.700">7</text>
            </g>
          </svg>

          <div class="zoom">
            <svg width="21" height="21" viewBox="0 0 21 21"><path d="M10.500 0V21M0 10.500H21" stroke="#666" stroke-width="6" /></svg>
            <span class="zoom-rule"></span>
            <svg width="21" height="21" viewBox="0 0 21 21"><path d="M0 10.500H21" stroke="#666" stroke-width="6" /></svg>
          </div>
          <div class="types"><span class="sat">Satellite</span><span class="ter">Terrain</span></div>
          <svg class="google" width="134" height="50" viewBox="0 0 134 50">
            <text x="2" y="34" textLength="124" lengthAdjust="spacingAndGlyphs">Google</text>
          </svg>
          <div class="attrib">
            <div class="credit">
              <span class="c1">Map data ©2016 Google, INEGI</span>
              <span class="c2">1000 km</span>
              <svg width="104" height="18" viewBox="0 0 104 18">
                <path d="M0 1H7V16H0Z" fill="#fff" />
                <path d="M4 3V12H99V3" fill="none" stroke="#666" stroke-width="4" />
              </svg>
            </div>
            <div class="terms">Terms of Use</div>
          </div>
        </div>
      </section>
    </main>

    <footer class="footer">
      <div class="f1">DataONE is a collaboration among many partner organizations, and is funded by the US National Science Foundation (NSF) under a Cooperative Agreement. Acknowledgement: This material is based upon work supported by the</div>
      <div class="f2">National Science Foundation under Grant Numbers 0830944 and 1430508. Disclaimer: Any opinions, findings, and conclusions or recommendations expressed in this material are those of the author(s) and do not necessarily</div>
      <div class="f3">reflect the views of the National Science Foundation.</div>
    </footer>
  </div>
</template>

<style>
body {
  background: #fff;
}
</style>

<style scoped>
.page {
  width: 2554px;
  height: 1308px;
  overflow: hidden;
  display: flex;
  flex-direction: column;
  font-family: "Liberation Sans", Arial, sans-serif;
  color: #555;
  white-space: nowrap;
}
.page * {
  box-sizing: border-box;
}
.page svg {
  display: block;
  flex: none;
}
.brand {
  height: 110px;
  flex: none;
  background: #fff;
  padding-left: 48px;
}
.brand-logo {
  overflow: visible;
}
.logo-data {
  font: 800 75px "Open Sans", sans-serif;
}
.logo-one {
  font: 300 90px "Open Sans", sans-serif;
  fill: #1d6d94;
}
.nav-main {
  height: 80px;
  flex: none;
  background: #660032;
  display: flex;
  align-items: center;
  padding: 2px 0 0 62px;
  gap: 60px;
}
.nav-link,
.sub-link {
  color: #fff;
  font-size: 28px;
  -webkit-text-stroke: 0.600px #fff;
}
.nav-sub {
  height: 80px;
  flex: none;
  background: #3d001e;
  display: flex;
  align-items: center;
  padding: 0 60px;
}
.nav-sub .sub-link,
.sub-title,
.jump {
  padding-top: 2px;
}
.sub-title {
  width: 269px;
  color: #fff;
  font-size: 24px;
  letter-spacing: -1px;
  -webkit-text-stroke: 0.400px #fff;
}
.s1 {
  width: 148px;
}
.s2 {
  width: 230px;
}
.jump {
  width: 128px;
  font-size: 28px;
  color: #c24c88;
}
.jump-input {
  width: 143px;
  height: 56px;
  margin-top: -4px;
  border-radius: 8px 0 0 8px;
  background: #661539;
  color: #c24c88;
  font-size: 26px;
  line-height: 54px;
  padding-left: 12px;
}
.jump-go {
  width: 84px;
  height: 56px;
  margin-top: -4px;
  border-radius: 0 6px 6px 0;
  background: #90265c;
  color: #fff;
  font-size: 28px;
  line-height: 57px;
  text-align: center;
  text-shadow: 0 2px 2px #3d001e;
  -webkit-text-stroke: 0.600px #fff;
}
.spacer {
  flex: 1;
}
.or {
  font-size: 28px;
  color: #8d3b74;
  margin: 0 27px 0 28px;
}
.signup {
  width: 136px;
  height: 60px;
  margin-top: 4px;
  border-radius: 8px;
  background: #90265c;
  color: #fff;
  font-size: 28px;
  line-height: 61px;
  text-align: center;
  text-shadow: 0 2px 2px #3d001e;
  -webkit-text-stroke: 0.600px #fff;
}
.content {
  height: 936px;
  flex: none;
  display: flex;
  overflow: hidden;
}
.sidebar {
  width: 424px;
  height: 936px;
  flex: none;
  border-right: 2px solid #ccc;
}
.side-head {
  height: 78px;
  margin-bottom: -8px;
  padding-left: 12px;
  display: flex;
  align-items: center;
  gap: 19px;
}
.side-title {
  font-size: 29.600px;
  font-weight: 700;
}
.search-box {
  display: flex;
  padding-left: 12px;
}
.search-input {
  width: 298px;
  height: 60px;
  border: 2px solid #ccc;
  border-radius: 8px 0 0 8px;
  box-shadow: inset 0 0 12px #ddd;
  color: #999;
  font-size: 25.500px;
  line-height: 58px;
  padding-left: 12px;
}
.search-btn {
  width: 66px;
  height: 60px;
  border: 2px solid #666;
  border-left: 0;
  border-radius: 0 8px 8px 0;
  padding: 16px 0 0 24px;
}
.side-rule {
  height: 4px;
  margin-top: 32px;
  background: #ddd;
}
.filter-title {
  height: 100px;
  padding: 43px 0 0 12px;
  font-size: 28px;
  line-height: 36px;
  font-weight: 700;
}
.filter {
  height: 74px;
  display: flex;
  flex-direction: column;
  justify-content: space-between;
}
.filter-row {
  display: flex;
  align-items: center;
  padding-left: 12px;
  margin-bottom: -12px;
}
.caret {
  margin-right: 31px;
}
.filter-icon {
  flex: none;
}
.filter-label {
  font-size: 26px;
  font-weight: 700;
  padding-top: 2px;
}
.dash {
  width: 390px;
  height: 2px;
  margin-left: 12px;
  flex: none;
  background: repeating-linear-gradient(90deg, #ccc 0 6px, transparent 6px 12px);
}
.dash.short {
  width: 352px;
}
.dash.last {
  background: none;
}
.results {
  width: 1066px;
  flex: none;
}
.count {
  margin: 0;
  padding-left: 20px;
  height: 80px;
  line-height: 81px;
  font-size: 28px;
  font-weight: 700;
}
.toolbar {
  height: 96px;
  display: flex;
  padding-left: 20px;
}
.pager {
  height: 60px;
  display: flex;
  border: 2px solid #ddd;
  border-radius: 9px;
  overflow: hidden;
  box-shadow: 0 2px 3px #e6e6e6;
  font-size: 28px;
  font-weight: 700;
  color: #1c6e84;
}
.pg {
  text-align: center;
  line-height: 58px;
  border-right: 2px solid #ddd;
}
.pg.active {
  background: #1c6e84;
  border-right-color: #1c6e84;
  color: #fff;
}
.dots {
  color: #999;
  font-size: 38px;
  line-height: 56px;
}
.w1 { width: 65px; }
.w2 { width: 67px; }
.w3 { width: 64px; }
.w4 { width: 84px; }
.w5 { width: 120px; }
.pg.w6 { width: 109px; border-right: 0; }
.sort-label {
  margin: 14px 0 0 206px;
  width: 99px;
  font-size: 26px;
  line-height: 30px;
}
.select {
  width: 206px;
  height: 56px;
  border: 2px solid #ccc;
  border-radius: 10px;
  display: flex;
  align-items: center;
  justify-content: space-between;
  padding: 0 8px 2px 18px;
  font-size: 26px;
}
.item {
  border-top: 2px solid #ebedee;
  padding: 26px 0 0 26px;
}
.item1,
.item3 {
  background: #f4f5f7;
}
.item1 { height: 236px; }
.item2 { height: 276px; }
.item3 { height: 260px; }
.thumb {
  float: left;
}
.item3 .thumb {
  margin-top: -2px;
}
.dryad {
  font: 600 16px "Open Sans", sans-serif;
  letter-spacing: 3px;
  fill: #3f8f22;
}
.lter {
  font: 400 37px "Liberation Serif", serif;
  fill: #03386a;
}
.line {
  height: 40px;
  line-height: 42px;
  font-size: 28px;
}
.line b {
  color: #1c6e84;
}
.url {
  height: 40px;
  line-height: 43px;
  font-size: 25.200px;
  color: #888;
  clear: left;
}
.marks {
  display: flex;
  gap: 28px;
  padding-top: 28px;
}
.marks .doc {
  margin-top: 2px;
}
.map-col {
  width: 1064px;
  flex: none;
}
.map-bar {
  height: 60px;
  background: linear-gradient(#060606, #4c4c4c 22px);
  color: #fff;
  display: flex;
  align-items: center;
  gap: 17px;
  padding: 2px 0 0 9px;
  font-size: 28px;
  -webkit-text-stroke: 0.400px #fff;
}
.map {
  position: relative;
  height: 876px;
  overflow: hidden;
  font-family: Roboto, sans-serif;
}
.shade {
  mix-blend-mode: multiply;
}
.place {
  font-family: Roboto, sans-serif;
  fill: #6f8085;
  stroke: #d6e4e9;
  stroke-width: 5px;
  stroke-linejoin: round;
  paint-order: stroke;
  text-anchor: middle;
}
.country {
  font-weight: 500;
}
.num {
  font: 700 30px Roboto, sans-serif;
  fill: #444;
  text-anchor: middle;
}
.zoom {
  position: absolute;
  left: 20px;
  top: 384px;
  width: 56px;
  height: 110px;
  background: #fff;
  border-radius: 4px;
  box-shadow: 0 2px 8px rgba(0, 0, 0, 0.300);
  display: flex;
  flex-direction: column;
  align-items: center;
  justify-content: space-between;
  padding: 17px 0 17px;
}
.zoom-rule {
  width: 38px;
  height: 2px;
  background: #e6e6e6;
}
.types {
  position: absolute;
  left: 20px;
  top: 732px;
  width: 214px;
  height: 72px;
  background: #fff;
  border-radius: 4px;
  box-shadow: 0 2px 8px rgba(0, 0, 0, 0.300);
  display: flex;
  font-size: 22px;
  line-height: 69px;
  text-align: center;
}
.sat {
  width: 111px;
  color: #565656;
}
.ter {
  width: 103px;
  color: #000;
  font-weight: 500;
  box-shadow: -2px 0 2px #eee;
}
.google {
  position: absolute;
  left: 11px;
  top: 828px;
}
.google text {
  font: 400 42px Lato, sans-serif;
  fill: #fff;
  stroke: #fff;
  stroke-width: 1.400px;
  filter: drop-shadow(0 0 2px rgba(0, 0, 0, 0.350));
}
.attrib {
  position: absolute;
  right: 0;
  bottom: 0;
  display: flex;
  gap: 2px;
  color: #444;
  font-size: 20px;
  line-height: 26px;
}
.credit {
  width: 508px;
  height: 28px;
  padding-left: 9px;
  display: flex;
  background: rgba(245, 245, 245, 0.700);
}
.c1 { width: 300px; }
.c2 { width: 84px; }
.credit svg {
  margin-top: 6px;
}
.terms {
  width: 142px;
  height: 28px;
  padding-left: 10px;
  font-weight: 500;
  -webkit-text-stroke: 0.500px #444;
  background: rgba(245, 245, 245, 0.700);
}
.footer {
  height: 102px;
  flex: none;
  background: #333;
  color: #fff;
  padding: 20px 0 0 273px;
  font-size: 20px;
  letter-spacing: -0.175px;
  line-height: 26px;
  -webkit-text-stroke: 0.400px #fff;
}
</style>
